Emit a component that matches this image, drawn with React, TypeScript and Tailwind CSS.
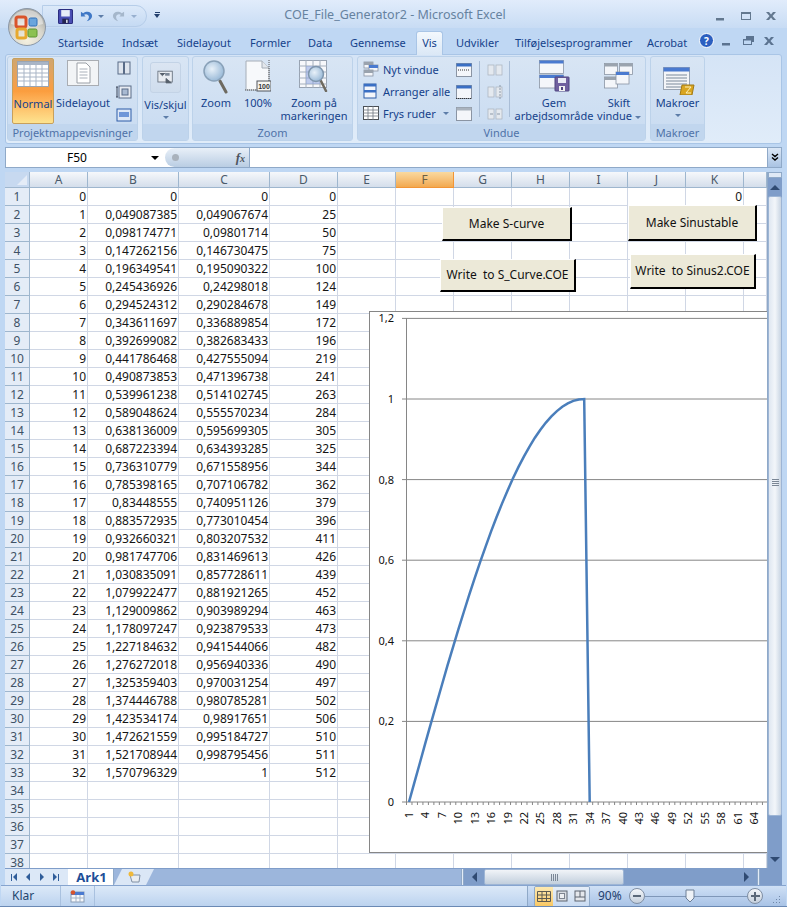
import React from 'react';

const rows = [
  ['0', '0', '0', '0'],
  ['1', '0,049087385', '0,049067674', '25'],
  ['2', '0,098174771', '0,09801714', '50'],
  ['3', '0,147262156', '0,146730475', '75'],
  ['4', '0,196349541', '0,195090322', '100'],
  ['5', '0,245436926', '0,24298018', '124'],
  ['6', '0,294524312', '0,290284678', '149'],
  ['7', '0,343611697', '0,336889854', '172'],
  ['8', '0,392699082', '0,382683433', '196'],
  ['9', '0,441786468', '0,427555094', '219'],
  ['10', '0,490873853', '0,471396738', '241'],
  ['11', '0,539961238', '0,514102745', '263'],
  ['12', '0,589048624', '0,555570234', '284'],
  ['13', '0,638136009', '0,595699305', '305'],
  ['14', '0,687223394', '0,634393285', '325'],
  ['15', '0,736310779', '0,671558956', '344'],
  ['16', '0,785398165', '0,707106782', '362'],
  ['17', '0,83448555', '0,740951126', '379'],
  ['18', '0,883572935', '0,773010454', '396'],
  ['19', '0,932660321', '0,803207532', '411'],
  ['20', '0,981747706', '0,831469613', '426'],
  ['21', '1,030835091', '0,857728611', '439'],
  ['22', '1,079922477', '0,881921265', '452'],
  ['23', '1,129009862', '0,903989294', '463'],
  ['24', '1,178097247', '0,923879533', '473'],
  ['25', '1,227184632', '0,941544066', '482'],
  ['26', '1,276272018', '0,956940336', '490'],
  ['27', '1,325359403', '0,970031254', '497'],
  ['28', '1,374446788', '0,980785281', '502'],
  ['29', '1,423534174', '0,98917651', '506'],
  ['30', '1,472621559', '0,995184727', '510'],
  ['31', '1,521708944', '0,998795456', '511'],
  ['32', '1,570796329', '1', '512'],
];

const colLetters = ['A', 'B', 'C', 'D', 'E', 'F', 'G', 'H', 'I', 'J', 'K', ''];
const gridCols = 'grid grid-cols-[25px_58px_91px_91px_68px_58px_58px_58px_58px_58px_58px_58px_23px]';

const Orb = () => (
  <svg viewBox="0 0 38 38" className="absolute left-[8px] top-[8px] w-[38px] h-[38px]">
    <defs>
      <radialGradient id="orb" cx="50%" cy="85%" r="75%">
        <stop offset="0" stopColor="#f4f0e0" />
        <stop offset="0.6" stopColor="#d8d6cc" />
        <stop offset="1" stopColor="#a9aaa6" />
      </radialGradient>
    </defs>
    <circle cx="19" cy="19" r="18.5" fill="url(#orb)" stroke="#8b97a6" />
    <path d="M3 16a16 14 0 0 1 32 0q-16 5-32 0z" fill="#fff" opacity="0.45" />
    <rect x="8" y="9" width="10" height="10" rx="2" fill="none" stroke="#d9542b" strokeWidth="3" />
    <rect x="21" y="10" width="8" height="8" rx="1.5" fill="#6aa5dc" stroke="#2f6fb8" />
    <rect x="9" y="21" width="9" height="9" rx="2" fill="none" stroke="#e7a92e" strokeWidth="3" />
    <rect x="20" y="21" width="9" height="8" rx="1.5" fill="#8cc152" stroke="#5d9432" />
  </svg>
);

const SaveIcon = () => (
  <svg viewBox="0 0 14 14" className="w-[15px] h-[15px]">
    <rect x="0.5" y="0.5" width="13" height="13" rx="1" fill="#4b4fb5" stroke="#2b2d80" />
    <rect x="3" y="1" width="8" height="6" fill="#e8ecf8" />
    <rect x="4" y="9" width="6" height="4.5" fill="#23244f" />
    <rect x="7.5" y="10" width="1.5" height="3" fill="#d8dbe8" />
  </svg>
);

const UndoIcon = ({ color, flip }: { color: string; flip?: boolean }) => (
  <svg viewBox="0 0 14 14" className={flip ? 'w-[13px] h-[13px] -scale-x-100' : 'w-[13px] h-[13px]'}>
    <path d="M1 2v5h5L4.4 5.2C6 3.8 9.4 4.4 9.6 7.2c.1 2-1 3.4-2.4 4.8 3.4-.6 5.8-2.8 5.8-5.6C13 2 7.6.2 3.4 3.4z" fill={color} />
  </svg>
);

const Caret = ({ className = '' }: { className?: string }) => (
  <span className={`inline-block w-0 h-0 border-l-[3px] border-r-[3px] border-t-[3px] border-l-transparent border-r-transparent border-t-[#5d7da8] ${className}`} />
);

const WinBtn = ({ kind, dark }: { kind: 'min' | 'max' | 'restore' | 'close'; dark?: boolean }) => {
  const c = dark ? '#5b7390' : '#63788f';
  return (
    <svg viewBox="0 0 14 12" className="w-[14px] h-[12px]">
      {kind === 'min' && <rect x="2" y="8" width="8" height="2.5" fill={c} />}
      {kind === 'max' && <path d="M2 2h10v8H2z M3 4v5h8V4z" fill={c} fillRule="evenodd" />}
      {kind === 'restore' && <path d="M5 1h8v6h-2v3H2V4h3z M3 5.5V9h7V5.5z" fill={c} fillRule="evenodd" />}
      {kind === 'close' && <path d="M2 2l3 0 2 2.5L9 2l3 0-3.5 4L12 10H9L7 7.5 5 10H2l3.500-4z" fill={c} />}
    </svg>
  );
};

const NormalIcon = () => (
  <svg viewBox="0 0 32 26" className="w-[32px] h-[26px]">
    <rect x="0.5" y="0.5" width="31" height="25" fill="#fff" stroke="#9aa5b3" />
    <rect x="1" y="1" width="30" height="3" fill="#a9b5c6" />
    {[8, 12, 16, 20].map((y) => <line key={y} x1="1" x2="31" y1={y} y2={y} stroke="#a9b5c6" />)}
    {[7, 13, 19, 25].map((x) => <line key={x} y1="1" y2="25" x1={x} x2={x} stroke="#a9b5c6" />)}
  </svg>
);

const PageLayoutIcon = () => (
  <svg viewBox="0 0 32 26" className="w-[32px] h-[26px]">
    <rect x="0.500" y="0.5" width="31" height="25" fill="#f2f4f6" stroke="#a9adb3" />
    <path d="M10 3h9l4 4v16H10z" fill="#fff" stroke="#9a9fa6" />
    <path d="M12.500 9h8M12.500 12h8M12.500 15h8M12.500 18h8" stroke="#a9b0ba" />
  </svg>
);

const SmallBox = ({ children }: { children: React.ReactNode }) => (
  <svg viewBox="0 0 16 16" className="w-[16px] h-[16px]">{children}</svg>
);

const ShowHideIcon = () => (
  <svg viewBox="0 0 20 16" className="w-[18px] h-[15px]">
    <rect x="1" y="1" width="16" height="12" fill="#e9edf2" stroke="#6a7480" />
    <path d="M3 3l3 3 3-3M10 9l6 5-6 0z" fill="#555f6b" stroke="#5b6570" />
    <rect x="9" y="3" width="5" height="3" fill="#7b8796" />
  </svg>
);

const MagnifierIcon = () => (
  <svg viewBox="0 0 26 34" className="w-[26px] h-[34px]">
    <defs>
      <radialGradient id="lens" cx="40%" cy="40%" r="70%">
        <stop offset="0" stopColor="#e8f1f9" />
        <stop offset="1" stopColor="#8fb2d3" />
      </radialGradient>
    </defs>
    <line x1="17" y1="21" x2="23" y2="32" stroke="#6e6a60" strokeWidth="3" strokeLinecap="round" />
    <circle cx="11" cy="11" r="10" fill="url(#lens)" stroke="#89a1b8" strokeWidth="1.500" />
  </svg>
);

const HundredIcon = () => (
  <svg viewBox="0 0 26 32" className="w-[26px] h-[32px]">
    <path d="M1 1h16l7 7v22H1z" fill="#f7f9fb" stroke="#a6aeb8" />
    <path d="M17 1v7h7" fill="#e3e7ec" stroke="#a6aeb8" />
    <path d="M24 0v30M0 30h24" stroke="#555" strokeDasharray="1 1" />
    <rect x="12" y="21" width="14" height="10" fill="#f6f6f3" stroke="#50555c" />
    <text x="19" y="29" fontSize="7" textAnchor="middle" fontWeight="700" fontFamily="Liberation Sans" fill="#333">100</text>
  </svg>
);

const ZoomSelIcon = () => (
  <svg viewBox="0 0 30 32" className="w-[30px] h-[32px]">
    <rect x="0.500" y="0.5" width="27" height="27" fill="#f7f8fb" stroke="#98a3b2" />
    {[6, 12, 18, 24].map((y) => <line key={y} x1="0" x2="28" y1={y} y2={y} stroke="#a3aebc" />)}
    {[7, 14, 21].map((x) => <line key={x} y1="0" y2="28" x1={x} x2={x} stroke="#a3aebc" />)}
    <rect x="7" y="6" width="14" height="18" fill="#8fa6e0" opacity="0.55" />
    <line x1="22" y1="21" x2="27" y2="31" stroke="#6e6a60" strokeWidth="2.500" strokeLinecap="round" />
    <circle cx="17" cy="14" r="7.500" fill="url(#lens)" stroke="#7f96ad" strokeWidth="1.500" />
  </svg>
);

const Win = ({ x, y, w, h, dim }: { x: number; y: number; w: number; h: number; dim?: boolean }) => (
  <g>
    <rect x={x} y={y} width={w} height={h} fill="#f4f6fa" stroke="#8a94a3" strokeWidth="0.8" />
    <rect x={x} y={y} width={w} height={3} fill={dim ? '#9aa3ae' : '#4a7ad0'} />
  </g>
);

const NewWindowIcon = () => (
  <SmallBox>
    <Win x={1} y={1} w={9} h={6} dim />
    <Win x={6} y={4} w={9} h={6} />
    <Win x={1} y={9} w={9} h={6} dim />
  </SmallBox>
);

const ArrangeIcon = () => (
  <SmallBox>
    <rect x="1" y="1" width="12" height="14" fill="#f4f6fa" stroke="#2c5da8" />
    <rect x="1" y="1" width="12" height="2.500" fill="#3a6fc4" />
    <rect x="1" y="7" width="12" height="2.500" fill="#3a6fc4" />
  </SmallBox>
);

const FreezeIcon = () => (
  <SmallBox>
    <rect x="0.500" y="1.500" width="15" height="13" fill="#fff" stroke="#4a4f55" />
    <path d="M0 5h16M0 8h16M0 11h16M5 1v14M10 1v14" stroke="#6e7680" strokeWidth="0.800" />
  </SmallBox>
);

const SplitIcon = ({ kind }: { kind: number }) => (
  <SmallBox>
    <rect x="0.500" y="1.500" width="15" height="13" fill="#f4f6fa" stroke="#8a94a3" />
    {kind === 0 && <rect x="0.500" y="1.500" width="15" height="3" fill="#3a6fc4" />}
    {kind === 1 && <rect x="0.500" y="1.500" width="15" height="3" fill="#3a6fc4" />}
    {kind === 2 && <rect x="0.500" y="1.500" width="15" height="3" fill="#aab3be" />}
    {kind === 0 && <line x1="2" x2="14" y1="8" y2="8" stroke="#333" strokeDasharray="1 1" />}
    {kind === 1 && <path d="M0 14.500h16" stroke="#333" strokeDasharray="1 1" />}
  </SmallBox>
);

const GreyIcon = ({ i }: { i: number }) => (
  <SmallBox>
    <g fill="#e4e9ef" stroke="#aeb7c2" strokeWidth="0.800">
      <rect x="1" y="3" width="6" height="10" />
      <rect x="9" y="3" width="6" height="10" />
    </g>
    {i === 1 && <path d="M13 1v14" stroke="#8d99a8" strokeDasharray="2 1" />}
    {i === 2 && <path d="M3 8h3M10 8h3" stroke="#8d99a8" />}
  </SmallBox>
);

const GemIcon = () => (
  <svg viewBox="0 0 31 32" className="w-[31px] h-[32px]">
    <Win x={0.5} y={0.5} w={24} h={13} />
    <Win x={0.5} y={15} w={24} h={13} />
    <rect x="16" y="17" width="14" height="14" rx="0.5" fill="#70609f" stroke="#4f4480" />
    <rect x="19" y="18" width="8" height="5" fill="#e9ebf5" />
    <rect x="20" y="26" width="6" height="5" fill="#f2f2f2" />
    <rect x="22" y="27" width="2" height="3" fill="#4f4480" />
  </svg>
);

const SkiftIcon = () => (
  <svg viewBox="0 0 30 26" className="w-[30px] h-[26px]">
    <Win x={0.5} y={0.5} w={13} h={11} dim />
    <Win x={15.5} y={0.5} w={13} h={11} dim />
    <Win x={0.5} y={14} w={13} h={11} dim />
    <Win x={12} y={9} w={13} h={12} />
  </svg>
);

const MakroIcon = () => (
  <svg viewBox="0 0 32 28" className="w-[32px] h-[28px]">
    <rect x="0.500" y="0.5" width="26" height="22" fill="#f4f5f8" stroke="#98a3b2" />
    <rect x="0.500" y="0.5" width="26" height="4" fill="#4a7ad0" />
    {[8, 11, 14, 17, 20].map((y) => <line key={y} x1="3" x2="24" y1={y} y2={y} stroke="#a3adba" strokeWidth="1.500" />)}
    <path d="M19 18h12l-2 10H17z" fill="#d9a520" stroke="#a07a18" />
    <path d="M22 20h6l-5 6h5" fill="none" stroke="#fff2b8" />
  </svg>
);

const RibbonBtn = ({ icon, label, w, active }: { icon: React.ReactNode; label: React.ReactNode; w: string; active?: boolean }) => (
  <div
    className={`${w} h-[66px] shrink-0 flex flex-col items-center pt-[2px] text-center leading-[13px] ${
      active ? 'bg-gradient-to-b from-[#cfa670] via-[#fb9d3e] to-[#fde38f] border border-[#c8a05c] rounded-[2px]' : ''
    }`}
  >
    <div className="h-[36px] flex items-start justify-center shrink-0">{icon}</div>
    <div className="whitespace-nowrap">{label}</div>
  </div>
);

const Group = ({ w, label, children }: { w: string; label: string; children: React.ReactNode }) => (
  <div className={`${w} h-[85px] shrink-0 flex flex-col rounded-[3px] border border-[#bcd2ea] bg-gradient-to-b from-[#d8e5f4] to-[#c8dbf1]`}>
    <div className="h-[67px] pt-[1px] flex shrink-0">{children}</div>
    <div className="flex-1 flex items-center justify-center bg-[#c1d6ee] text-[#4f72a8] leading-none">{label}</div>
  </div>
);

const SmallRow = ({ icon, text, caret }: { icon: React.ReactNode; text: string; caret?: boolean }) => (
  <div className="h-[22px] flex items-center gap-[4px] whitespace-nowrap">
    {icon}
    <span>{text}</span>
    {caret && <Caret className="ml-[3px]" />}
  </div>
);

const Tab = ({ w, label }: { w: string; label: string }) => (
  <div className={`${w} shrink-0 h-[22px] flex items-center`}>{label}</div>
);

const Chart = () => {
  const vals = rows.map((r) => parseFloat(r[2].replace(',', '.')));
  vals.push(0);
  const px = (i: number) => 409 + 5.476 * i;
  const py = (v: number) => 802 - v * 403;
  const pts = vals.map((v, i) => `${px(i).toFixed(1)},${py(v).toFixed(1)}`).join(' ');
  const labels: number[] = [];
  for (let n = 1; n <= 64; n += 3) labels.push(n);
  const ticks: number[] = [];
  for (let i = 0; i < 66; i++) ticks.push(406.5 + 5.476 * i);
  return (
    <div className="absolute left-[364px] top-[139px] w-[420px] h-[542px] bg-white border border-[#868686]">
      <svg viewBox="370 312 418 540" className="w-[418px] h-[540px] font-['Noto_Sans']">
        {[
          ['1,2', 1.2],
          ['1', 1],
          ['0,8', 0.8],
          ['0,6', 0.6],
          ['0,4', 0.4],
          ['0,2', 0.2],
          ['0', 0],
        ].map(([t, v]) => (
          <g key={t}>
            <line x1="402" x2="788" y1={py(v as number)} y2={py(v as number)} stroke="#868686" />
            <text x="394" y={py(v as number) + 4} textAnchor="end" fontSize="11" fill="#111">{t}</text>
          </g>
        ))}
        <line x1="406.500" x2="406.500" y1="318" y2="802" stroke="#868686" />
        {ticks.map((x) => <line key={x} x1={x} x2={x} y1="802" y2="805" stroke="#868686" />)}
        <polyline points={pts} fill="none" stroke="#4a7ebb" strokeWidth="2.500" />
        {labels.map((n) => (
          <text key={n} transform={`translate(${px(n - 1) + 4},812) rotate(-90)`} textAnchor="end" fontSize="11" fill="#111">{n}</text>
        ))}
      </svg>
    </div>
  );
};

const MacroBtn = ({ pos, label }: { pos: string; label: string }) => (
  <div className={`absolute ${pos} flex items-center justify-center bg-[#ece9d8] border-l border-t border-l-white border-t-white border-r-2 border-b-2 border-r-black border-b-black text-[12px] text-[#111] whitespace-pre`}>
    {label}
  </div>
);

const ScrollBtn = ({ dir }: { dir: 'up' | 'down' | 'left' | 'right' }) => {
  if (dir === 'up') return <span className="w-0 h-0 border-l-[5px] border-r-[5px] border-b-[5px] border-l-transparent border-r-transparent border-b-[#2f4a72]" />;
  if (dir === 'down') return <span className="w-0 h-0 border-l-[5px] border-r-[5px] border-t-[5px] border-l-transparent border-r-transparent border-t-[#2f4a72]" />;
  if (dir === 'left') return <span className="w-0 h-0 border-t-[5px] border-b-[5px] border-r-[5px] border-t-transparent border-b-transparent border-r-[#2f4a72]" />;
  return <span className="w-0 h-0 border-t-[5px] border-b-[5px] border-l-[5px] border-t-transparent border-b-transparent border-l-[#2f4a72]" />;
};

const NavBtn = ({ dir, bar }: { dir: 'l' | 'r'; bar?: boolean }) => (
  <div className="w-[14px] flex items-center justify-center">
    {bar && dir === 'l' && <span className="w-[1px] h-[7px] bg-[#2f5d9a] mr-[1px]" />}
    <span className={dir === 'l'
      ? 'w-0 h-0 border-t-[4px] border-b-[4px] border-r-[4px] border-t-transparent border-b-transparent border-r-[#2f5d9a]'
      : 'w-0 h-0 border-t-[4px] border-b-[4px] border-l-[4px] border-t-transparent border-b-transparent border-l-[#2f5d9a]'} />
    {bar && dir === 'r' && <span className="w-[1px] h-[7px] bg-[#2f5d9a] ml-[1px]" />}
  </div>
);

const ViewBtn = ({ active, children }: { active?: boolean; children: React.ReactNode }) => (
  <div className={`w-[18px] h-[19px] flex items-center justify-center ${active ? 'bg-gradient-to-b from-[#fde9b0] to-[#f9c862]' : 'bg-gradient-to-b from-[#e6eef8] to-[#c9dbf1]'}`}>
    {children}
  </div>
);

export default function App() {
  return (
    <div className="relative w-[787px] h-[907px] overflow-hidden bg-[#bfd7f3] font-['Noto_Sans',sans-serif] text-[11px] text-[#15428b] flex flex-col">
      {/* title bar */}
      <div className="h-[28px] shrink-0 flex items-center bg-gradient-to-b from-[#e1ecfb] to-[#c8dcf4] relative">
        <div className="absolute left-[42px] top-[5px] w-[105px] h-[22px] rounded-r-full border border-[#b6cde9] bg-gradient-to-b from-[#dce9f9] to-[#c5daf3] flex items-center pl-[15px]">
          <SaveIcon />
          <div className="ml-[7px]"><UndoIcon color="#3f78c6" /></div>
          <Caret className="ml-[5px]" />
          <div className="ml-[8px]"><UndoIcon color="#a5b7cb" flip /></div>
          <Caret className="ml-[6px] opacity-50" />
        </div>
        <div className="absolute left-[154px] top-[12px] flex flex-col items-center gap-[1px]">
          <span className="w-[5px] h-[1px] bg-[#23406e]" />
          <span className="w-0 h-0 border-l-[3px] border-r-[3px] border-t-[4px] border-l-transparent border-r-transparent border-t-[#23406e]" />
        </div>
        <div className="w-full text-center pl-[3px] pt-[2px] text-[12.5px] text-[#66829f] whitespace-nowrap">COE_File_Generator2 - Microsoft Excel</div>
        <div className="absolute right-[9px] top-[10px] flex gap-[11px]">
          <WinBtn kind="min" />
          <WinBtn kind="max" />
          <WinBtn kind="close" />
        </div>
      </div>

      {/* tabs */}
      <div className="h-[26px] shrink-0 flex items-end pl-[58px] relative">
        <Tab w="w-[64px]" label="Startside" />
        <Tab w="w-[55px]" label="Indsæt" />
        <Tab w="w-[73px]" label="Sidelayout" />
        <Tab w="w-[58px]" label="Formler" />
        <Tab w="w-[42px]" label="Data" />
        <Tab w="w-[66px]" label="Gennemse" />
        <div className="w-[27px] h-[24px] shrink-0 mb-[-1px] relative z-10 flex items-center justify-center bg-gradient-to-b from-[#f3f8fd] to-[#dbe8f6] border border-b-0 border-[#a9c5e6] rounded-t-[3px]">Vis</div>
        <div className="w-[13px] shrink-0" />
        <Tab w="w-[59px]" label="Udvikler" />
        <Tab w="w-[132px]" label="Tilføjelsesprogrammer" />
        <Tab w="w-[48px]" label="Acrobat" />
        <div className="absolute left-[699px] top-[5px] w-[15px] h-[15px] rounded-full bg-[#2c5fc0] border border-white flex items-center justify-center text-white text-[10px] font-bold leading-none">?</div>
        <div className="absolute left-[720px] top-[7px] flex gap-[7px]">
          <WinBtn kind="min" dark />
          <WinBtn kind="restore" dark />
          <WinBtn kind="close" dark />
        </div>
      </div>

      {/* ribbon */}
      <div className="h-[90px] shrink-0 mx-[5px] rounded-[3px] border border-[#a9c5e6] bg-gradient-to-b from-[#d5e4f6] to-[#e0ecf9] flex pt-[1px] pl-[1px] leading-[13px]">
        <Group w="w-[131px]" label="Projektmappevisninger">
          <div className="ml-[4px]"><RibbonBtn w="w-[42px]" active icon={<NormalIcon />} label="Normal" /></div>
          <div className="ml-[2px]"><RibbonBtn w="w-[54px]" icon={<PageLayoutIcon />} label="Sidelayout" /></div>
          <div className="ml-[6px] pt-[3px] flex flex-col gap-[7px] text-[#5b6f8f]">
            <SmallBox>
              <rect x="2" y="1" width="12" height="12" fill="#dfe5ee" stroke="#5a6c88" />
              <path d="M8 1v12" stroke="#5a6c88" strokeWidth="2" />
            </SmallBox>
            <SmallBox>
              <rect x="3" y="2" width="12" height="12" fill="#e7ebf2" stroke="#5a6c88" />
              <rect x="6" y="5" width="6" height="6" fill="#a9bad2" stroke="#5a6c88" />
              <path d="M0 3h2M1 3v10M0 13h2" stroke="#3a4558" />
            </SmallBox>
            <SmallBox>
              <rect x="1" y="2" width="14" height="12" fill="#dde7f6" stroke="#2c5da8" />
              <rect x="3" y="5" width="10" height="5" fill="#6f96d8" />
            </SmallBox>
          </div>
        </Group>
        <div className="w-[4px] shrink-0" />
        <Group w="w-[47px]" label="">
          <div className="w-full h-[66px] flex flex-col items-center pt-[4px] leading-[13px]">
            <div className="w-[31px] h-[31px] mb-[5px] shrink-0 rounded-[3px] border border-[#c3d3e6] bg-gradient-to-b from-[#dbe5f2] to-[#cfdded] flex items-center justify-center">
              <ShowHideIcon />
            </div>
            <div className="whitespace-nowrap">Vis/skjul</div>
            <Caret className="mt-[5px]" />
          </div>
        </Group>
        <div className="w-[3px] shrink-0" />
        <Group w="w-[161px]" label="Zoom">
          <div className="ml-[3px]"><RibbonBtn w="w-[40px]" icon={<MagnifierIcon />} label="Zoom" /></div>
          <div className="ml-[2px]"><RibbonBtn w="w-[40px]" icon={<HundredIcon />} label="100%" /></div>
          <div className="ml-[2px]"><RibbonBtn w="w-[68px]" icon={<ZoomSelIcon />} label={<>Zoom på<br />markeringen</>} /></div>
        </Group>
        <div className="w-[4px] shrink-0" />
        <Group w="w-[289px]" label="Vindue">
          <div className="ml-[5px] w-[93px] shrink-0 flex flex-col">
            <SmallRow icon={<NewWindowIcon />} text="Nyt vindue" />
            <SmallRow icon={<ArrangeIcon />} text="Arranger alle" />
            <SmallRow icon={<FreezeIcon />} text="Frys ruder" caret />
          </div>
          <div className="pt-[4px] flex flex-col gap-[6px] shrink-0">
            <SplitIcon kind={0} />
            <SplitIcon kind={1} />
            <SplitIcon kind={2} />
          </div>
          <div className="ml-[7px] mt-[3px] w-[1px] h-[56px] bg-[#a9bdd6] shrink-0" />
          <div className="ml-[7px] pt-[4px] flex flex-col gap-[6px] shrink-0">
            <GreyIcon i={0} />
            <GreyIcon i={1} />
            <GreyIcon i={2} />
          </div>
          <div className="ml-[6px] mt-[3px] w-[1px] h-[56px] bg-[#a9bdd6] shrink-0" />
          <div className="ml-[5px]"><RibbonBtn w="w-[78px]" icon={<GemIcon />} label={<>Gem<br />arbejdsområde</>} /></div>
          <div className="ml-[4px]">
            <RibbonBtn w="w-[44px]" icon={<div className="pt-[3px]"><SkiftIcon /></div>} label={<>Skift<br />vindue <Caret className="align-middle" /></>} />
          </div>
        </Group>
        <div className="w-[4px] shrink-0" />
        <Group w="w-[55px]" label="Makroer">
          <div className="w-full h-[66px] flex flex-col items-center pt-[9px] leading-[13px]">
            <div className="h-[29px] ml-[3px] shrink-0"><MakroIcon /></div>
            <div>Makroer</div>
            <Caret className="mt-[5px]" />
          </div>
        </Group>
      </div>

      {/* formula bar */}
      <div className="h-[21px] shrink-0 mt-[3px] ml-[5px] mr-[5px] flex border border-[#8fa9c8] bg-white text-black">
        <div className="w-[157px] shrink-0 relative flex items-center justify-center pr-[15px] text-[12px] bg-white">
          F50
          <span className="absolute right-[4px] top-[8px] w-0 h-0 border-l-[4px] border-r-[4px] border-t-[4px] border-l-transparent border-r-transparent border-t-black" />
        </div>
        <div className="w-[85px] shrink-0 ml-[2px] rounded-l-full border-r border-[#8fa9c8] bg-gradient-to-b from-[#e9f0f8] to-[#b9cde3] flex items-center justify-between px-[4px]">
          <span className="w-[7px] h-[7px] ml-[3px] rounded-full bg-[#a9b2bc]" />
          <span className="font-['Liberation_Serif'] italic font-bold text-[13px] text-[#4d5560]">f<span className="text-[10px]">x</span></span>
        </div>
        <div className="flex-1" />
        <div className="w-[14px] shrink-0 bg-gradient-to-b from-[#dbe7f6] to-[#a9c3e3] border-l border-[#8fa9c8] flex flex-col items-center justify-center">
          <svg viewBox="0 0 8 9" className="w-[8px] h-[9px]"><path d="M1 1l3 2.500 3-2.500M1 4.500l3 2.500 3-2.500" fill="none" stroke="#000" strokeWidth="1.400" /></svg>
        </div>
      </div>

      {/* sheet + vertical scrollbar */}
      <div className="h-[696px] shrink-0 mt-[4px] ml-[5px] mr-[5px] flex">
        <div className="relative w-[762px] shrink-0 overflow-hidden bg-white">
          <div className={`${gridCols} h-[16px]`}>
            <div className="bg-[#c7d9f0] border-r border-b border-[#9eb6ce] flex items-end justify-end p-[2px]">
              <span className="w-0 h-0 border-l-[10px] border-b-[10px] border-l-transparent border-b-[#e4ecf7]" />
            </div>
            {colLetters.map((c, i) => (
              <div
                key={i}
                className={`flex items-center justify-center border-r border-b text-[12px] leading-none ${
                  c === 'F'
                    ? 'bg-gradient-to-b from-[#f9d99f] to-[#f2a94e] border-[#f29536] text-[#6c5f43]'
                    : 'bg-gradient-to-b from-[#f6f8fb] to-[#d4deeb] border-[#9eb6ce] text-[#4a5a6a]'
                }`}
              >
                {c}
              </div>
            ))}
          </div>
          {Array.from({ length: 38 }, (_, r) => {
            const row = rows[r];
            return (
              <div key={r} className={`${gridCols} h-[18px] text-[12px] leading-none text-[#151515]`}>
                <div className="flex items-center justify-center bg-[#e4ecf7] border-r border-b border-[#9eb6ce] text-[#3f5266]">{r + 1}</div>
                {colLetters.map((_c, i) => (
                  <div key={i} className="flex items-center justify-end pr-[1px] border-r border-b border-[#d0d7e5]">
                    {row && i < 4 ? row[i] : r === 0 && i === 10 ? '0' : ''}
                  </div>
                ))}
              </div>
            );
          })}
          <MacroBtn pos="left-[437px] top-[35px] w-[130px] h-[34px]" label="Make S-curve" />
          <MacroBtn pos="left-[623px] top-[33px] w-[129px] h-[36px]" label="Make Sinustable" />
          <MacroBtn pos="left-[435px] top-[87px] w-[136px] h-[33px]" label="Write  to S_Curve.COE" />
          <MacroBtn pos="left-[625px] top-[82px] w-[126px] h-[35px]" label="Write  to Sinus2.COE" />
          <Chart />
        </div>
        <div className="w-[15px] shrink-0 flex flex-col bg-[#7f9dc9] border-l border-[#8fa9c8]">
          <div className="h-[6px] shrink-0 bg-[#dfe9f6] border border-[#8fa9c8]" />
          <div className="h-[18px] shrink-0 flex items-center justify-center"><ScrollBtn dir="up" /></div>
          <div className="h-[620px] shrink-0 rounded-[2px] border border-[#9db5d5] bg-gradient-to-r from-[#dfe7f1] via-[#f3f6fa] to-[#c9d5e3] flex items-center justify-center mt-0 pb-[48px]">
            <div className="w-[7px] flex flex-col gap-[1px]">
              <span className="h-[1px] bg-[#7b8796]" />
              <span className="h-[1px] bg-[#7b8796]" />
              <span className="h-[1px] bg-[#7b8796]" />
              <span className="h-[1px] bg-[#7b8796]" />
            </div>
          </div>
          <div className="flex-1 flex items-end justify-center pb-[6px]"><ScrollBtn dir="down" /></div>
        </div>
      </div>

      {/* sheet tabs + horizontal scrollbar */}
      <div className="h-[17px] shrink-0 ml-[5px] mr-[5px] flex items-stretch bg-[#9cb6dc] border-t border-[#7f9dc9] relative">
        <div className="w-[63px] shrink-0 bg-[#dce8f7] flex items-center px-[2px]">
          <NavBtn dir="l" bar />
          <NavBtn dir="l" />
          <NavBtn dir="r" />
          <NavBtn dir="r" bar />
        </div>
        <div className="w-[46px] shrink-0 bg-white border-r border-[#8fa9c8] flex items-center justify-center pl-[2px] font-bold text-[13px] leading-none text-[#1e4f98]">Ark1</div>
        <div className="w-[40px] shrink-0 flex items-center bg-[#dbe7f6] [clip-path:polygon(20%_0,100%_0,80%_100%,0_100%)] justify-center">
          <svg viewBox="0 0 14 12" className="w-[14px] h-[12px]">
            <path d="M3 4h10l-1 7H5z" fill="#e9edf2" stroke="#8090a4" />
            <circle cx="4" cy="3" r="2.500" fill="#f0b93a" />
          </svg>
        </div>
        <div className="w-[307px] shrink-0" />
        <div className="flex-1 flex items-stretch bg-[#7f9dc9]">
          <div className="w-[3px] bg-[#e3ecf7] border-x border-[#8fa9c8]" />
          <div className="w-[20px] flex items-center justify-center"><ScrollBtn dir="left" /></div>
          <div className="w-[140px] rounded-[2px] border border-[#9db5d5] bg-gradient-to-b from-[#f1f4f8] to-[#c2cfdd] flex items-center justify-center gap-[1px]">
            <span className="w-[1px] h-[7px] bg-[#7b8796]" />
            <span className="w-[1px] h-[7px] bg-[#7b8796]" />
            <span className="w-[1px] h-[7px] bg-[#7b8796]" />
            <span className="w-[1px] h-[7px] bg-[#7b8796]" />
          </div>
          <div className="w-[127px] flex items-center justify-end pr-[2px]"><ScrollBtn dir="right" /></div>
          <div className="w-[3px] ml-[6px] bg-[#e3ecf7] border-x border-[#8fa9c8]" />
          <div className="flex-1" />
        </div>
      </div>

      {/* status bar */}
      <div className="h-[21px] shrink-0 mx-[1px] flex items-stretch bg-gradient-to-b from-[#dce9f8] to-[#bcd3ef] border-t border-[#86a4cf] text-[12px] text-[#24466f]">
        <div className="w-[60px] pl-[11px] flex items-center border-r border-[#a9c1df] shrink-0">Klar</div>
        <div className="w-[34px] flex items-center justify-center border-r border-[#a9c1df] shrink-0">
          <svg viewBox="0 0 15 13" className="w-[15px] h-[13px]">
            <rect x="1" y="2" width="13" height="10" fill="#f6f8fb" stroke="#8a9db5" />
            <rect x="1" y="2" width="13" height="3" fill="#4a7ad0" />
            <path d="M1 8h13M6 5v7M10 5v7" stroke="#a3b3c6" />
            <circle cx="3" cy="2.500" r="2.200" fill="#d9542b" />
          </svg>
        </div>
        <div className="w-[433px] shrink-0 border-r border-[#8fa9c8]" />
        <div className="flex-1 flex items-center bg-gradient-to-b from-[#cfe0f5] to-[#a9c3e6]">
          <div className="ml-[6px] flex items-center border border-[#8fa9c8] rounded-[2px] overflow-hidden">
            <ViewBtn active>
              <svg viewBox="0 0 14 11" className="w-[14px] h-[11px]"><path d="M.5.500h13v10H.500zM0 4h14M0 7.500h14M5 0v11M9.500 0v11" fill="none" stroke="#5d5a50" /></svg>
            </ViewBtn>
            <ViewBtn>
              <svg viewBox="0 0 12 12" className="w-[12px] h-[12px]"><rect x="1" y="1" width="10" height="10" fill="#d9dde3" stroke="#5d6470" /><rect x="3.500" y="3.500" width="5" height="5" fill="#eef0f3" stroke="#7d8490" /></svg>
            </ViewBtn>
            <ViewBtn>
              <svg viewBox="0 0 12 12" className="w-[12px] h-[12px]"><rect x="1" y="1" width="10" height="10" fill="#e4e7ec" stroke="#5d6470" /><path d="M6 1v6M1 7h10" stroke="#5d6470" /></svg>
            </ViewBtn>
          </div>
          <div className="ml-[8px] w-[30px] text-[#23406e] shrink-0 leading-none">90%</div>
          <div className="ml-[1px] w-[16px] h-[16px] rounded-full border border-[#7f8ea3] bg-gradient-to-b from-[#f4f6f9] to-[#c4cfdc] flex items-center justify-center shrink-0">
            <span className="w-[8px] h-[2px] bg-[#5b6878]" />
          </div>
          <div className="relative w-[102px] h-[1px] bg-[#7f97b8] shrink-0">
            <svg viewBox="0 0 10 14" className="absolute left-[40px] top-[-7px] w-[10px] h-[14px]">
              <path d="M1 1h8v8l-4 4-4-4z" fill="#eef2f7" stroke="#6c7e96" />
            </svg>
          </div>
          <div className="w-[16px] h-[16px] rounded-full border border-[#7f8ea3] bg-gradient-to-b from-[#f4f6f9] to-[#c4cfdc] flex items-center justify-center shrink-0 relative">
            <span className="w-[9px] h-[2px] bg-[#5b6878]" />
            <span className="absolute w-[2px] h-[9px] bg-[#5b6878]" />
          </div>
          <svg viewBox="0 0 9 9" className="ml-[9px] w-[9px] h-[9px] self-end mb-[2px]">
            <path d="M7 1h1v1H7zM4 4h1v1H4zM7 4h1v1H7zM1 7h1v1H1zM4 7h1v1H4zM7 7h1v1H7z" fill="#6f87a8" />
          </svg>
        </div>
      </div>
      <div className="flex-1 bg-[#6a89b4]" />
      <Orb />
    </div>
  );
}
